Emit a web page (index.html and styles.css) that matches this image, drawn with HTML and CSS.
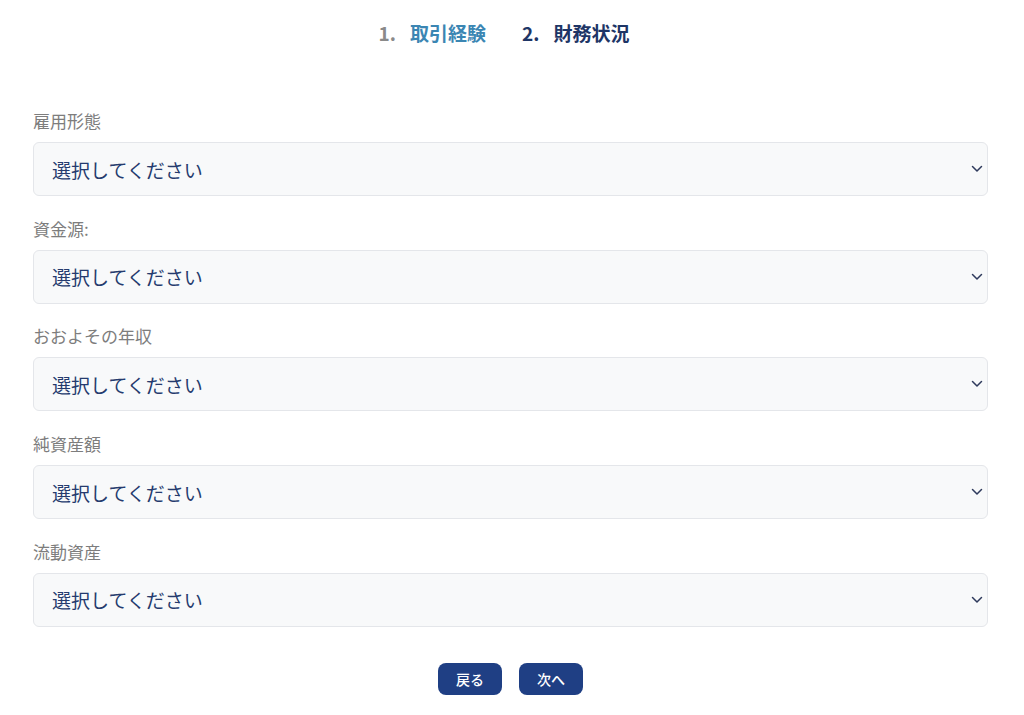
FILE: index.html
```html
<!DOCTYPE html>
<html lang="ja">
<head>
<meta charset="utf-8">
<title>財務状況</title>
<link rel="stylesheet" href="styles.css">
</head>
<body>
<nav class="steps">
  <div class="step done"><span class="num">1.</span><span class="name">取引経験</span></div>
  <div class="step current"><span class="num">2.</span><span class="name">財務状況</span></div>
</nav>
<form class="form">
  <div class="field">
    <label class="label">雇用形態</label>
    <div class="select"><span>選択してください</span><svg class="chev" viewBox="0 0 12 8" width="12" height="8"><path d="M1.5 1.5 L6 6 L10.5 1.5" fill="none" stroke="#2e3a5c" stroke-width="1.5" stroke-linecap="round" stroke-linejoin="round"/></svg></div>
  </div>
  <div class="field">
    <label class="label">資金源:</label>
    <div class="select"><span>選択してください</span><svg class="chev" viewBox="0 0 12 8" width="12" height="8"><path d="M1.5 1.5 L6 6 L10.5 1.5" fill="none" stroke="#2e3a5c" stroke-width="1.5" stroke-linecap="round" stroke-linejoin="round"/></svg></div>
  </div>
  <div class="field">
    <label class="label">おおよその年収</label>
    <div class="select"><span>選択してください</span><svg class="chev" viewBox="0 0 12 8" width="12" height="8"><path d="M1.5 1.5 L6 6 L10.5 1.5" fill="none" stroke="#2e3a5c" stroke-width="1.5" stroke-linecap="round" stroke-linejoin="round"/></svg></div>
  </div>
  <div class="field">
    <label class="label">純資産額</label>
    <div class="select"><span>選択してください</span><svg class="chev" viewBox="0 0 12 8" width="12" height="8"><path d="M1.5 1.5 L6 6 L10.5 1.5" fill="none" stroke="#2e3a5c" stroke-width="1.5" stroke-linecap="round" stroke-linejoin="round"/></svg></div>
  </div>
  <div class="field last">
    <label class="label">流動資産</label>
    <div class="select"><span>選択してください</span><svg class="chev" viewBox="0 0 12 8" width="12" height="8"><path d="M1.5 1.5 L6 6 L10.5 1.5" fill="none" stroke="#2e3a5c" stroke-width="1.5" stroke-linecap="round" stroke-linejoin="round"/></svg></div>
  </div>
  <div class="actions">
    <button type="button" class="btn">戻る</button>
    <button type="button" class="btn">次へ</button>
  </div>
</form>
</body>
</html>
```

FILE: styles.css
```css
* { box-sizing: border-box; }
html, body { margin: 0; padding: 0; background: #ffffff; }
body {
  font-family: "Noto Sans CJK JP", "Noto Sans", sans-serif;
  width: 1024px;
}
.steps {
  display: flex;
  justify-content: center;
  gap: 36px;
  padding-top: 20px;
  height: 109px;
  padding-right: 16px;
}
.step {
  display: flex;
  gap: 14px;
  font-size: 19px;
  line-height: 26px;
  font-weight: 700;
}
.step .num { color: #8a8a8a; }
.step.done .name { color: #3b86b3; }
.step.current .num, .step.current .name { color: #1e3566; }
.form {
  margin: 0 36px 0 33px;
}
.field {
  display: flex;
  flex-direction: column;
  margin-bottom: 20.7px;
}
.field.last { margin-bottom: 36px; }
.label {
  font-size: 17px;
  line-height: 24px;
  color: #7d7d7d;
  margin-bottom: 9px;
}
.select {
  height: 54px;
  background: #f8f9fa;
  border: 1px solid #e4e6ea;
  border-radius: 6px;
  display: flex;
  align-items: center;
  justify-content: space-between;
  padding: 0 4px 0 18px;
  font-size: 19px;
  color: #253b6e;
}
.chev { display: block; }
.actions {
  display: flex;
  justify-content: center;
  gap: 17px;
}
.btn {
  width: 64px;
  height: 32px;
  border: none;
  border-radius: 8px;
  background: #1f3f84;
  color: #ffffff;
  font-family: "Noto Sans CJK JP", sans-serif;
  font-size: 14px;
  font-weight: 500;
  padding: 0;
}
```
